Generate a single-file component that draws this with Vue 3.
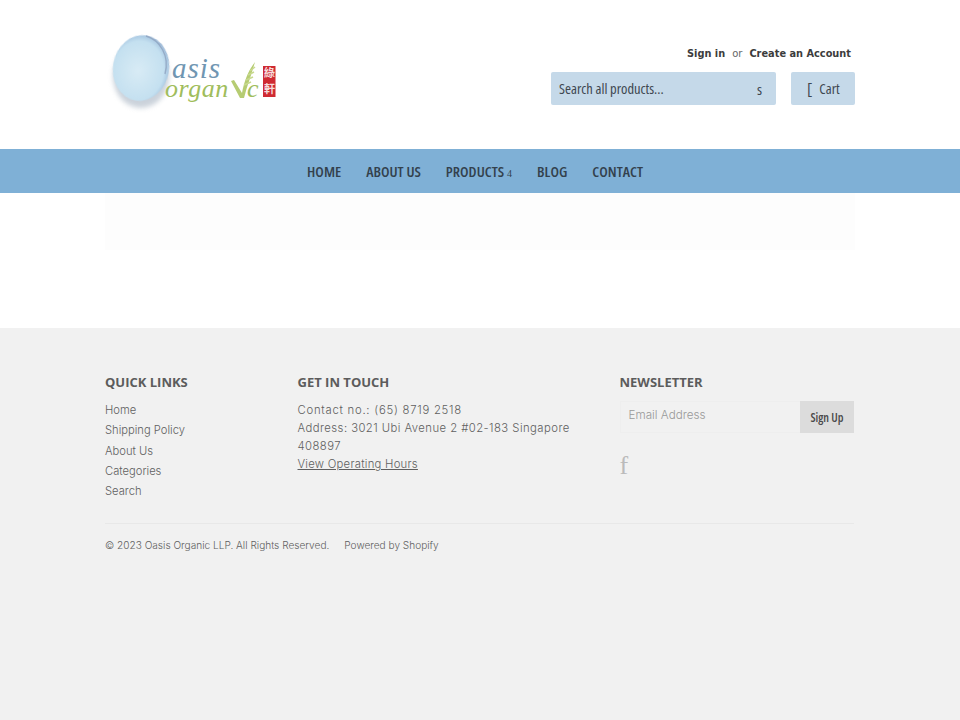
<script setup>
const navItems = [
  { label: 'HOME' },
  { label: 'ABOUT US' },
  { label: 'PRODUCTS', caret: '4' },
  { label: 'BLOG' },
  { label: 'CONTACT' }
]
const quickLinks = ['Home', 'Shipping Policy', 'About Us', 'Categories', 'Search']
</script>

<template>
  <div class="page">
    <header class="header">
      <div class="wrap header-inner">
        <svg class="logo" width="180" height="90" viewBox="0 0 180 90" aria-label="Oasis Organic">
          <defs>
            <radialGradient id="drop" cx="0.46" cy="0.55" r="0.58">
              <stop offset="0" stop-color="#d8ebf5" />
              <stop offset="0.78" stop-color="#c4e0f0" />
              <stop offset="0.93" stop-color="#a9c8e2" />
              <stop offset="1" stop-color="#7d97bd" />
            </radialGradient>
            <filter id="blur" x="-30%" y="-30%" width="160%" height="160%">
              <feGaussianBlur stdDeviation="2.600" />
            </filter>
            <filter id="soft" x="-10%" y="-10%" width="120%" height="120%">
              <feGaussianBlur stdDeviation="0.450" />
            </filter>
          </defs>
          <ellipse cx="36" cy="50" rx="28" ry="32" fill="#a7b4c2" opacity="0.6" filter="url(#blur)" />
          <ellipse cx="36" cy="42" rx="28" ry="33" fill="url(#drop)" transform="rotate(10 36 42)" filter="url(#soft)" />
          <path d="M41 10 C55 14 65 30 60 48" fill="none" stroke="#8ea2bf" stroke-width="1.400" opacity="0.8" />
          <text x="67" y="52" class="logo-asis">asis</text>
          <text x="60" y="71" class="logo-organ">organ</text>
          <text x="142" y="71" class="logo-organ">c</text>
          <path d="M126 55 L129 54 L137 67 C139 56 143 45 150 36 C147 47 142 60 139 72 L135 72 Z" fill="#b6cc72" filter="url(#soft)" />
          <path d="M141 54 L148 51 M143 49 L149 46 M145 45 L150 41 M139 59 L146 56" stroke="#c8d98f" stroke-width="1.600" fill="none" />
          <rect x="158" y="40" width="12.500" height="31" fill="#cf2a30" filter="url(#soft)" />
          <text x="159" y="51" class="logo-stamp">綠</text>
          <text x="159" y="67" class="logo-stamp">軒</text>
        </svg>
        <div class="header-right">
          <div class="account">
            <a class="account-link">Sign in</a>
            <span class="or">or</span>
            <a class="account-link">Create an Account</a>
          </div>
          <div class="tools">
            <div class="search">
              <span>Search all products...</span>
              <span class="search-icon">s</span>
            </div>
            <div class="cart">
              <span class="cart-icon">[</span>
              <span>Cart</span>
            </div>
          </div>
        </div>
      </div>
    </header>

    <nav class="nav">
      <a v-for="item in navItems" :key="item.label" class="nav-item">
        {{ item.label }}<span v-if="item.caret" class="caret">{{ item.caret }}</span>
      </a>
    </nav>

    <main class="main">
      <div class="wrap main-band"></div>
    </main>

    <footer class="footer">
      <div class="wrap">
        <div class="columns">
          <section class="col-links">
            <h4>QUICK LINKS</h4>
            <ul>
              <li v-for="link in quickLinks" :key="link">{{ link }}</li>
            </ul>
          </section>
          <section class="col-touch">
            <h4>GET IN TOUCH</h4>
            <p class="phone">Contact no.: (65) 8719 2518</p>
            <p>Address: 3021 Ubi Avenue 2 #02-183 Singapore 408897</p>
            <p><a class="hours">View Operating Hours</a></p>
          </section>
          <section class="col-news">
            <h4>NEWSLETTER</h4>
            <div class="signup">
              <span class="email">Email Address</span>
              <span class="signup-btn">Sign Up</span>
            </div>
            <div class="social">f</div>
          </section>
        </div>
        <div class="legal">
          <span>© 2023 Oasis Organic LLP. All Rights Reserved.</span>
          <span>Powered by Shopify</span>
        </div>
      </div>
    </footer>
  </div>
</template>

<style>
html, body { margin: 0; background: #fff; }
</style>

<style scoped>
.page {
  min-height: 720px;
  display: flex;
  flex-direction: column;
  font-family: Inter, sans-serif;
  font-weight: 300;
  color: #5f5f5f;
}
.wrap { width: 750px; margin: 0 auto; }
.header { height: 149px; }
.header-inner { display: flex; justify-content: space-between; }
.logo { margin-top: 26px; display: block; }
.logo-asis { font: italic 29px "Liberation Serif", serif; fill: #7096b2; letter-spacing: 1px; }
.logo-organ { font: italic 26px "Liberation Serif", serif; fill: #a0bd5c; letter-spacing: 0.500px; }
.logo-stamp { font: 700 11px "Noto Sans CJK TC", sans-serif; fill: #f6dcdc; }
.header-right { display: flex; flex-direction: column; align-items: flex-end; }
.account {
  margin-top: 47px;
  height: 13px;
  padding-right: 4px;
  display: flex;
  gap: 7px;
  align-items: center;
  font-family: "DejaVu Sans", sans-serif;
  font-weight: 400;
  line-height: 13px;
}
.account-link { font-weight: 700; color: #3c3c3c; font-size: 9.800px; }
.or { color: #666; font-size: 10px; }
.tools { display: flex; gap: 15px; margin-top: 12px; }
.search, .cart {
  height: 33px;
  background: #c5d9e9;
  border-radius: 2px;
  display: flex;
  align-items: center;
  font-family: "Open Sans", sans-serif;
  font-stretch: 75%;
  font-weight: 500;
  font-size: 14.500px;
  color: #3e4750;
}
.search { width: 225px; box-sizing: border-box; padding: 0 14px 0 8px; justify-content: space-between; }
.search-icon { font-size: 15px; }
.cart { width: 64px; box-sizing: border-box; padding-left: 16px; gap: 7px; }
.cart-icon { font-size: 17px; font-weight: 400; }
.nav {
  height: 44px;
  box-sizing: border-box;
  padding-right: 10px;
  background: #7fb0d6;
  display: flex;
  justify-content: center;
  align-items: center;
  gap: 25px;
  font-family: "Open Sans", sans-serif;
  font-stretch: 75%;
  font-weight: 600;
  font-size: 15px;
  color: #33414d;
}
.nav-item { white-space: nowrap; }
.caret { font-family: "Liberation Serif", serif; font-size: 10px; font-weight: 400; margin-left: 3px; }
.main { height: 135px; }
.main-band { height: 57px; background: #fdfdfd; }
.footer { flex: 1; background: #f1f1f1; }
h4 {
  margin: 0;
  font-family: "Open Sans", sans-serif;
  font-weight: 700;
  font-size: 13px;
  line-height: 18px;
  color: #5c5c5c;
}
.columns { display: flex; padding-top: 45px; height: 150px; }
.col-links { width: 192.500px; }
.col-touch { width: 322px; }
.col-news { width: 235px; }
ul { list-style: none; margin: 9px 0 0; padding: 0; }
li { font-size: 11.200px; line-height: 20.300px; }
.col-touch p { margin: 0; line-height: 18px; font-size: 11.300px; letter-spacing: 0.450px; max-width: 285px; }
.col-touch h4 + p { margin-top: 10px; }
.col-touch .phone { letter-spacing: 0.750px; }
.col-touch p .hours { text-decoration: underline; letter-spacing: 0.250px; }
.signup { display: flex; margin-top: 10px; height: 32px; width: 234.500px; border: 1px solid #eee; box-sizing: border-box; }
.email { flex: 1; padding: 6px 0 0 8px; color: #999; font-size: 11.700px; }
.signup-btn {
  width: 54px;
  margin: -1px -1px -1px 0;
  background: #dcdcdc;
  display: flex; align-items: center; justify-content: center;
  font-family: "Open Sans", sans-serif;
  font-stretch: 75%;
  font-weight: 600;
  font-size: 12px;
  color: #4a4a4a;
}
.social { margin-top: 18px; font-family: "Liberation Serif", serif; font-size: 26px; font-weight: 400; line-height: 30px; color: #bbb; }
.legal {
  border-top: 1px solid #e8e8e8;
  width: 749px;
  padding-top: 14px;
  display: flex;
  gap: 15px;
  font-size: 10.100px;
  line-height: 14px;
}
</style>
